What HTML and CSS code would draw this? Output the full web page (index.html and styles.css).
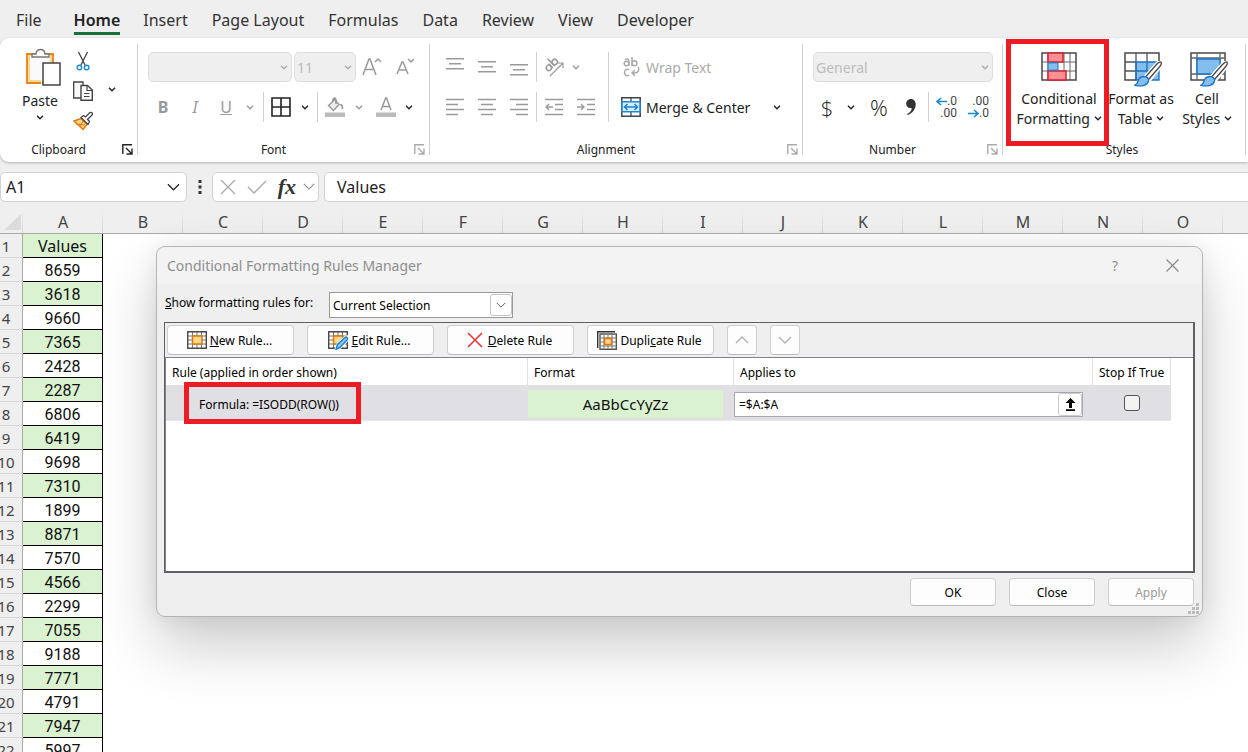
FILE: index.html
```html
<!DOCTYPE html>
<html lang="en">
<head>
<meta charset="utf-8">
<title>Conditional Formatting Rules Manager</title>
<link rel="stylesheet" href="styles.css">
</head>
<body>
<svg class="defs" aria-hidden="true">
  <symbol id="chev" viewBox="0 0 8 5"><path d="M1 .8 4 3.8 7 .8" fill="none" stroke="currentColor" stroke-width="1.4"/></symbol>
  <symbol id="chev-lg" viewBox="0 0 14 8"><path d="M1 1l6 6 6-6" fill="none" stroke="currentColor" stroke-width="1.3"/></symbol>
  <symbol id="launch" viewBox="0 0 11 11"><path d="M.8 10V.8H10M4 4l5.5 5.5M10 4.5V10H4.500" fill="none" stroke="currentColor" stroke-width="1.4"/></symbol>
  <symbol id="grid" viewBox="0 0 20 18"><path d="M.7.7h18.600v16.600H.7z" fill="#fff"/><path d="M5.500 1v16M10 1v16M14.500 1v16M1 5h18M1 9h18M1 13h18" stroke="#777" fill="none"/><path d="M.7.7h18.600v16.600H.7z" fill="none" stroke="#484848" stroke-width="1.400"/></symbol>
  <symbol id="brush" viewBox="0 0 28 26"><path d="M27 1c1 1 0 3-1 4.500L14.500 20l-4-3L22 4c2-2 4-3.600 5-3z" fill="#fff" stroke="#fff" stroke-width="4"/><path d="M26.800 1c1 1 .2 3-1 4.500L14.500 18.500l-3-2.500L22 4c2-2 4-3.600 4.800-3z" fill="#fff" stroke="#484848" stroke-width="1.300"/><path d="M10 15.500c3 0 5 2 4.500 4.500C13.500 24 8 26 .8 24.300c3-1.300 2.700-3 3.700-5.500 1-2.300 3-3.300 5.500-3.300z" fill="#83beec" stroke="#1a73c4" stroke-width="1.300"/></symbol>
</svg>

<header class="top">
  <nav class="tabs">
    <button class="tab tab-file">File</button>
    <button class="tab tab-on">Home</button>
    <button class="tab">Insert</button>
    <button class="tab">Page Layout</button>
    <button class="tab">Formulas</button>
    <button class="tab">Data</button>
    <button class="tab">Review</button>
    <button class="tab">View</button>
    <button class="tab">Developer</button>
  </nav>

  <div class="ribbon">
    <section class="group">
      <div class="clip">
        <button class="paste">
          <svg width="36" height="38" viewBox="0 0 36 38"><path d="M2 6h26v29H2z" fill="#fbd98b" stroke="#e8821e" stroke-width="1.800"/><path d="M5 8h20v24H5z" fill="#fafafa"/><path d="M7 9V6h4c.5-6 8.500-6 9 0h4v3z" fill="#fff" stroke="#777" stroke-width="1.400"/><path d="M18 15h17v22H18z" fill="#fff" stroke="#444" stroke-width="1.500"/><path d="M16.500 37V14" stroke="#fff"/></svg>
          <span>Paste</span>
          <svg class="chev"><use href="#chev"/></svg>
        </button>
        <div class="clip-tools">
          <button class="ib" aria-label="Cut"><svg width="14" height="20" viewBox="0 0 14 20"><path d="M2.500 1l6.500 13M11.500 1L5 14" stroke="#444" stroke-width="1.300" fill="none"/><circle cx="3.400" cy="16.500" r="2.300" fill="#fff" stroke="#2088d8" stroke-width="1.400"/><circle cx="10.600" cy="16.500" r="2.300" fill="#fff" stroke="#2088d8" stroke-width="1.400"/></svg></button>
          <button class="ib" aria-label="Copy"><svg width="20" height="20" viewBox="0 0 20 20"><path d="M8 17H.7V1H10v3" fill="#fafafa" stroke="#444" stroke-width="1.300"/><path d="M8 4.500h6.500L19.300 9v10.300H8z" fill="#fff" stroke="#444" stroke-width="1.400"/><path d="M14 5v4.500h5M11 12.500h5.500M11 15.500h5.500" fill="none" stroke="#444" stroke-width="1.200"/></svg></button>
          <button class="ib" aria-label="Format Painter"><svg width="20" height="20" viewBox="0 0 20 20"><path d="M1 10l7-2.500 6 6L10 18.500z" fill="#fbd98b" stroke="#e8750a" stroke-width="1.500"/><path d="M3 13l9 1M7 16l3-6" stroke="#e8750a"/><path d="M8 6.500l7 7 1.500-3-2-2 4.500-4.500c1.500-1.500-1-3.500-2.300-2.200L12.500 6l-2-1.500z" fill="#fff" stroke="#444" stroke-width="1.300"/></svg></button>
        </div>
        <button class="ib copy-more" aria-label="Copy options"><svg class="chev"><use href="#chev"/></svg></button>
      </div>
      <div class="glabel"><span>Clipboard</span><button class="launch" aria-label="Clipboard settings"><svg width="11" height="11"><use href="#launch"/></svg></button></div>
    </section>

    <section class="group off">
      <div class="rows">
        <div class="row font-row">
          <div class="combo combo-font"><select aria-label="Font" disabled><option></option></select><svg class="chev"><use href="#chev"/></svg></div>
          <div class="combo combo-size"><select aria-label="Font size" disabled><option>11</option></select><svg class="chev"><use href="#chev"/></svg></div>
          <button class="ib w32" aria-label="Increase font size"><svg width="20" height="22" viewBox="0 0 20 22"><path d="M1 19L7 3h1l6 16M3.300 13.500h8.400M13 6l3-3 3 3" fill="none" stroke="currentColor" stroke-width="1.500"/></svg></button>
          <button class="ib w32" aria-label="Decrease font size"><svg width="20" height="22" viewBox="0 0 20 22"><path d="M3 18L8 6h1l5 12M5 14h7M14 3l3 3 3-3" fill="none" stroke="currentColor" stroke-width="1.500"/></svg></button>
        </div>
        <div class="row">
          <button class="ib w32"><b>B</b></button>
          <button class="ib w32"><i>I</i></button>
          <button class="ib w30"><u>U</u></button>
          <button class="ib w18" aria-label="Underline options"><svg class="chev"><use href="#chev"/></svg></button>
          <span class="sep"></span>
          <button class="ib w32 dark" aria-label="Borders"><svg width="20" height="20" viewBox="0 0 20 20"><path d="M1 1h18v18H1zM10 1v18M1 10h18" fill="none" stroke="#222" stroke-width="1.600"/></svg></button>
          <button class="ib w16 dark" aria-label="Border options"><svg class="chev"><use href="#chev"/></svg></button>
          <span class="sep"></span>
          <button class="ib w32" aria-label="Fill color"><svg width="20" height="20" viewBox="0 0 20 20"><path d="M3.500 8.500L10 2.500l4 5-5.500 6z" fill="#eee" stroke="#999" stroke-width="1.400"/><path d="M8 4c0-4 3-4 3 0v3M15 8c1.500-1 2.500 1 2.500 4" fill="none" stroke="#999" stroke-width="1.700"/><path d="M0 15.500h20v4.500H0z" fill="#bbb"/></svg></button>
          <button class="ib w16" aria-label="Fill options"><svg class="chev"><use href="#chev"/></svg></button>
          <button class="ib w38" aria-label="Font color"><svg width="20" height="20" viewBox="0 0 20 20"><path d="M5 13L9.700 1h.8L15 13M6.500 9.500h7" fill="none" stroke="#999" stroke-width="1.500"/><path d="M0 15.500h20v4.500H0z" fill="#bbb"/></svg></button>
          <button class="ib dark" aria-label="Font color options"><svg class="chev"><use href="#chev"/></svg></button>
        </div>
      </div>
      <div class="glabel"><span>Font</span><button class="launch" aria-label="Font settings"><svg width="11" height="11"><use href="#launch"/></svg></button></div>
    </section>

    <section class="group off">
      <div class="align">
        <div class="rows">
          <div class="row">
            <button class="ib w32 up" aria-label="Top align"><svg width="18" height="12" viewBox="0 0 18 12"><path d="M0 .7h18M3 5.700h12M0 10.700h18" stroke="currentColor" stroke-width="1.400"/></svg></button>
            <button class="ib w32" aria-label="Middle align"><svg width="18" height="12" viewBox="0 0 18 12"><path d="M0 .7h18M3 5.700h12M0 10.700h18" stroke="currentColor" stroke-width="1.400"/></svg></button>
            <button class="ib w32 down" aria-label="Bottom align"><svg width="18" height="12" viewBox="0 0 18 12"><path d="M0 .7h18M3 5.700h12M0 10.700h18" stroke="currentColor" stroke-width="1.400"/></svg></button>
            <span class="sep sep-tight"></span>
            <button class="ib w32" aria-label="Orientation"><svg width="22" height="22" viewBox="0 0 22 22"><g fill="none" stroke="currentColor" stroke-width="1.500"><g transform="rotate(-45 8 9)"><circle cx="4.500" cy="9.500" r="2.600"/><path d="M7.200 6.500v5.800M10 2v10.300"/><circle cx="12.800" cy="9.500" r="2.700"/></g><path d="M7 20L20 7M15 7h5v5" stroke-width="1.200"/></g></svg></button>
            <button class="ib w12" aria-label="Orientation options"><svg class="chev"><use href="#chev"/></svg></button>
          </div>
          <div class="row">
            <button class="ib w32" aria-label="Align left"><svg width="18" height="18" viewBox="0 0 18 18"><path d="M0 1.500h18M0 6.500h12M0 11.500h18M0 16.500h12" stroke="currentColor" stroke-width="1.400"/></svg></button>
            <button class="ib w32" aria-label="Center"><svg width="18" height="18" viewBox="0 0 18 18"><path d="M0 1.500h18M3 6.500h12M0 11.500h18M3 16.500h12" stroke="currentColor" stroke-width="1.400"/></svg></button>
            <button class="ib w32" aria-label="Align right"><svg width="18" height="18" viewBox="0 0 18 18"><path d="M0 1.500h18M6 6.500h12M0 11.500h18M6 16.500h12" stroke="currentColor" stroke-width="1.400"/></svg></button>
            <span class="sep sep-tight"></span>
            <button class="ib w32" aria-label="Decrease indent"><svg width="18" height="18" viewBox="0 0 18 18"><path d="M0 1.500h18M10 6.500h8M10 11.500h8M0 16.500h18M8 9H1M4 6L1 9l3 3" fill="none" stroke="currentColor" stroke-width="1.400"/></svg></button>
            <button class="ib w32" aria-label="Increase indent"><svg width="18" height="18" viewBox="0 0 18 18"><path d="M0 1.500h18M10 6.500h8M10 11.500h8M0 16.500h18M0 9h7M4 6l3 3-3 3" fill="none" stroke="currentColor" stroke-width="1.400"/></svg></button>
          </div>
        </div>
        <div class="rows wrap-col">
          <div class="row"><button class="ib tb"><svg width="20" height="22" viewBox="0 0 20 22"><g fill="none" stroke="currentColor" stroke-width="1.500"><circle cx="5.500" cy="7.500" r="2.300"/><path d="M4 3.500c2-1 4-.5 4 1.500v5M11 1v9"/><circle cx="13.500" cy="7.200" r="2.500"/><path d="M8 14c-2-1.500-4.500-.5-4.500 2.500s2.500 4 4.500 2.500M17 11c2 3 0 6-3 6h-3M14 14l-3 3 3 3"/></g></svg><span>Wrap Text</span></button></div>
          <div class="row"><button class="ib tb dark"><svg width="20" height="20" viewBox="0 0 20 20"><path d="M.8.800h18.400v18.400H.8z" fill="#fff" stroke="#444" stroke-width="1.500"/><path d="M10 1v18" stroke="#444" stroke-width="1.300"/><path d="M1 4.800h18v10H1z" fill="#d5ecfb" stroke="#2088d8" stroke-width="1.500"/><path d="M3.500 10h13M6.500 7l-3 3 3 3M13.500 7l3 3-3 3" fill="none" stroke="#1a7fd0" stroke-width="1.500"/></svg><span>Merge &amp; Center</span></button><button class="ib dark merge-more" aria-label="Merge options"><svg class="chev"><use href="#chev"/></svg></button></div>
        </div>
      </div>
      <div class="glabel"><span>Alignment</span><button class="launch" aria-label="Alignment settings"><svg width="11" height="11"><use href="#launch"/></svg></button></div>
    </section>

    <section class="group off">
      <div class="rows">
        <div class="row"><div class="combo combo-num"><select aria-label="Number format" disabled><option>General</option></select><svg class="chev"><use href="#chev"/></svg></div></div>
        <div class="row dark">
          <button class="ib w30 sym">$</button>
          <button class="ib w18" aria-label="Currency options"><svg class="chev"><use href="#chev"/></svg></button>
          <button class="ib w38 sym">%</button>
          <button class="ib w26" aria-label="Comma style"><svg width="12" height="18" viewBox="0 0 12 18"><path d="M6 1c7 0 6.500 13-3.500 16l-.5-1c4-2 5-4.500 4.500-6C-.5 11-.5 1 6 1z" fill="#333"/></svg></button>
          <span class="sep"></span>
          <button class="dec" aria-label="Increase decimal"><span class="dec-row"><svg width="11" height="9" viewBox="0 0 11 9"><path d="M11 4.500H1M5 1L1 4.500 5 8" fill="none" stroke="#1a8ad8" stroke-width="1.600"/></svg>.0</span><span class="dec-row">.00</span></button>
          <button class="dec" aria-label="Decrease decimal"><span class="dec-row">.00</span><span class="dec-row"><svg width="11" height="9" viewBox="0 0 11 9"><path d="M0 4.500h10M6 1l4 3.500L6 8" fill="none" stroke="#1a8ad8" stroke-width="1.600"/></svg>.0</span></button>
        </div>
      </div>
      <div class="glabel"><span>Number</span><button class="launch" aria-label="Number settings"><svg width="11" height="11"><use href="#launch"/></svg></button></div>
    </section>

    <section class="group">
      <div class="styles">
        <button class="big marked">
          <svg width="36" height="36" viewBox="0 0 36 36"><path d="M1 1h34v27H1z" fill="#fff"/><path d="M7 1v27M13 1v27M23 1v27M29 1v27M1 10h34M1 19h34" stroke="#666" fill="none"/><path d="M1 1h34v27H1z" fill="none" stroke="#484848" stroke-width="1.500"/><path d="M7 1h15v9H7zM7 19h18v9H7z" fill="#ff8f94" stroke="#d8222a" stroke-width="1.500"/><path d="M7 10.800h10v7.400H7z" fill="#83beec" stroke="#1a73c4"/></svg>
          <span>Conditional</span><span>Formatting <svg class="chev"><use href="#chev"/></svg></span>
        </button>
        <button class="big">
          <svg width="38" height="36" viewBox="0 0 38 36"><path d="M1 1h34v27H1z" fill="#fff"/><path d="M12 10h23v18H12z" fill="#83beec"/><path d="M12 1v27M23 1v9M1 10h11M1 19h11" stroke="#555" stroke-width="1.300" fill="none"/><path d="M12 28V10h23v18zM23 10v18M12 19h23" fill="none" stroke="#1a73c4" stroke-width="1.300"/><path d="M12 28H1V1h34v9" fill="none" stroke="#484848" stroke-width="1.500"/><use href="#brush" x="10" y="9" width="28" height="26"/></svg>
          <span>Format as</span><span>Table <svg class="chev"><use href="#chev"/></svg></span>
        </button>
        <button class="big">
          <svg width="38" height="36" viewBox="0 0 38 36"><path d="M1 1h34v27H1z" fill="#fff" stroke="#484848" stroke-width="1.500"/><path d="M7 1v27M30 1v27M1 6h34M1 22h34" stroke="#666" fill="none" stroke-width="1.300"/><path d="M7 7h23v15H7z" fill="#83beec" stroke="#1a73c4" stroke-width="1.400"/><use href="#brush" x="10" y="9" width="28" height="26"/></svg>
          <span>Cell</span><span>Styles <svg class="chev"><use href="#chev"/></svg></span>
        </button>
      </div>
      <div class="glabel"><span>Styles</span></div>
    </section>
  </div>

  <div class="fbar">
    <div class="namebox"><input aria-label="Name box" value="A1"><svg width="13" height="8"><use href="#chev-lg"/></svg></div>
    <svg class="dots" width="4" height="14" viewBox="0 0 4 14"><path d="M.5 0h3v3h-3zM.5 5.500h3v3h-3zM.5 11h3v3h-3z" fill="#333"/></svg>
    <div class="fx">
      <button class="ib" aria-label="Cancel"><svg width="16" height="16" viewBox="0 0 16 16"><path d="M1 1l14 14M15 1L1 15" stroke="#aaa" stroke-width="1.300"/></svg></button>
      <button class="ib" aria-label="Enter"><svg width="20" height="14" viewBox="0 0 20 14"><path d="M1 7l6 6L19 1" fill="none" stroke="#aaa" stroke-width="1.300"/></svg></button>
      <button class="ib fxname"><i>fx</i></button>
      <button class="ib" aria-label="Function options"><svg width="12" height="7"><use href="#chev-lg"/></svg></button>
    </div>
    <input class="formula" aria-label="Formula" value="Values">
  </div>
</header>

<main class="sheet">
  <table class="cells">
    <colgroup><col class="c-num"><col span="16" class="c-val"></colgroup>
    <thead><tr><th class="corner"><svg width="17" height="16" viewBox="0 0 17 16"><path d="M17 0v16H0z" fill="#dcdcdc"/></svg></th><th>A</th><th>B</th><th>C</th><th>D</th><th>E</th><th>F</th><th>G</th><th>H</th><th>I</th><th>J</th><th>K</th><th>L</th><th>M</th><th>N</th><th>O</th><th></th></tr></thead>
    <tbody>
      <tr><th>1</th><td class="head">Values</td></tr>
      <tr><th>2</th><td>8659</td></tr>
      <tr><th>3</th><td>3618</td></tr>
      <tr><th>4</th><td>9660</td></tr>
      <tr><th>5</th><td>7365</td></tr>
      <tr><th>6</th><td>2428</td></tr>
      <tr><th>7</th><td>2287</td></tr>
      <tr><th>8</th><td>6806</td></tr>
      <tr><th>9</th><td>6419</td></tr>
      <tr><th>10</th><td>9698</td></tr>
      <tr><th>11</th><td>7310</td></tr>
      <tr><th>12</th><td>1899</td></tr>
      <tr><th>13</th><td>8871</td></tr>
      <tr><th>14</th><td>7570</td></tr>
      <tr><th>15</th><td>4566</td></tr>
      <tr><th>16</th><td>2299</td></tr>
      <tr><th>17</th><td>7055</td></tr>
      <tr><th>18</th><td>9188</td></tr>
      <tr><th>19</th><td>7771</td></tr>
      <tr><th>20</th><td>4791</td></tr>
      <tr><th>21</th><td>7947</td></tr>
      <tr><th>22</th><td>5997</td></tr>
    </tbody>
  </table>
</main>

<section class="dialog" role="dialog" aria-labelledby="dlg-title">
  <header class="dlg-bar">
    <h1 id="dlg-title">Conditional Formatting Rules Manager</h1>
    <button class="ib help">?</button>
    <button class="ib close" aria-label="Close dialog"><svg width="13" height="13" viewBox="0 0 13 13"><path d="M.5.5l12 12M12.500.5l-12 12" stroke="#888" stroke-width="1.200"/></svg></button>
  </header>
  <div class="dlg-body">
    <div class="scope">
      <label for="scope"><u>S</u>how formatting rules for:</label>
      <div class="scope-box"><select id="scope"><option>Current Selection</option></select><span class="scope-arrow"><svg width="10" height="6"><use href="#chev-lg"/></svg></span></div>
    </div>
    <div class="frame">
      <div class="tools">
        <button class="btn tool"><svg width="20" height="18" viewBox="0 0 20 18"><use href="#grid"/><path d="M5.500 5h9.500v8H5.500z" fill="#fbd98b" stroke="#e0760f" stroke-width="1.500"/></svg><span><u>N</u>ew Rule...</span></button>
        <button class="btn tool"><svg width="20" height="19" viewBox="0 0 20 19"><use href="#grid" width="20" height="18"/><path d="M5.500 5h9.500v8H5.500z" fill="#fbd98b" stroke="#e0760f" stroke-width="1.500"/><path d="M8 18.500l2-5.500 8-7c2-1 3 1 1.500 2.500l-7 7.500z" fill="#fff" stroke="#fff" stroke-width="3"/><path d="M8 18.300l1.500-4.800 7.500-7c1.500-1.300 3.500.7 2.200 2.200L12 16.500z" fill="#8cc8f2" stroke="#1a7fd0" stroke-width="1.400"/></svg><span><u>E</u>dit Rule...</span></button>
        <button class="btn tool"><svg class="x" width="16" height="16" viewBox="0 0 16 16"><path d="M1 1l14 14M15 1L1 15" stroke="#e8373d" stroke-width="1.600"/></svg><span><u>D</u>elete Rule</span></button>
        <button class="btn tool"><svg width="20" height="19" viewBox="0 0 20 19"><path d="M.7 17V.7H18" fill="none" stroke="#333" stroke-width="1.400"/><path d="M3 3h16.300v15.300H3z" fill="#fff" stroke="#555" stroke-width="1.400"/><path d="M7 3v15M11 3v15M15 3v15M3 7h16M3 11h16M3 15h16" stroke="#777"/><path d="M7.500 7.500h7v6h-7z" fill="#fbd98b" stroke="#e0760f" stroke-width="1.500"/></svg><span>Dupli<u>c</u>ate Rule</span></button>
        <button class="btn move" aria-label="Move up"><svg width="14" height="8" viewBox="0 0 14 8"><path d="M1 7l6-6 6 6" fill="none" stroke="currentColor" stroke-width="1.300"/></svg></button>
        <button class="btn move" aria-label="Move down"><svg width="14" height="8"><use href="#chev-lg"/></svg></button>
      </div>
      <div class="list">
        <table class="rules">
          <colgroup><col class="r-rule"><col class="r-format"><col class="r-applies"><col class="r-stop"></colgroup>
          <thead><tr><th>Rule (applied in order shown)</th><th>Format</th><th>Applies to</th><th>Stop If True</th></tr></thead>
          <tbody><tr>
            <td class="t-rule"><span class="formula-text">Formula: =ISODD(ROW())</span></td>
            <td><div class="preview">AaBbCcYyZz</div></td>
            <td><div class="range"><input aria-label="Applies to" value="=$A:$A"><button class="pick" aria-label="Collapse dialog"><svg width="11" height="13" viewBox="0 0 11 13"><path d="M5.500 0L10.500 5H7v5H4V5H.5zM1 11.300h9V13H1z" fill="#000"/></svg></button></div></td>
            <td class="t-stop"><input type="checkbox" class="stop" aria-label="Stop If True"></td>
          </tr></tbody>
        </table>
      </div>
    </div>
    <footer class="actions">
      <button class="btn act">OK</button>
      <button class="btn act">Close</button>
      <button class="btn act" disabled>Apply</button>
    </footer>
  </div>
  <svg class="grip" width="12" height="12" viewBox="0 0 12 12"><path d="M8 0h3v3H8zM4 4h3v3H4zM8 4h3v3H8zM0 8h3v3H0zM4 8h3v3H4zM8 8h3v3H8z" fill="#bbb"/></svg>
</section>
</body>
</html>
```

FILE: styles.css
```css
* { box-sizing: border-box; }
body {
  margin: 0;
  height: 100vh;
  display: flex;
  flex-direction: column;
  overflow: hidden;
  position: relative;
  background: #fff;
  color: #222;
  font: 14px "Noto Sans", "Open Sans", sans-serif;
}
button, input, select { font: inherit; color: inherit; margin: 0; }
button { padding: 0; border: 0; background: none; }
svg { display: block; flex: none; }
.defs { position: absolute; width: 0; height: 0; }
.chev { width: 8px; height: 5px; }

.top { background: #efefef; flex: none; }

/* Tabs */
.tabs { display: flex; gap: 24px; height: 38px; padding: 4px 16px 0; }
.tab { font-size: 16px; line-height: 28px; height: 31px; padding: 2px 0 1px; white-space: nowrap; color: #333; }
.tab-file { margin-right: 8px; }
.tab-on { margin-right: -1px; font-weight: 600; color: #222; border-bottom: 3px solid #18703a; padding: 2px 0 0; }

/* Ribbon */
.ribbon {
  display: grid;
  grid-template-columns: 138fr 292fr 373fr 200fr 245fr;
  height: 124px;
  background: #fff;
  border-radius: 9px 0 0 9px;
  box-shadow: 0 1px 3px rgba(0, 0, 0, .25);
}
.group { position: relative; display: flex; flex-direction: column; justify-content: space-between; padding: 14px 2px 3px 9px; min-width: 0; }
.group::after { content: ""; position: absolute; right: 0; top: 6px; bottom: 7px; width: 1px; background: #cfcfcf; }
.group:last-child::after { right: 2px; }
.off { color: #9a9a9a; }
.dark { color: #222; }
.glabel { display: flex; align-items: center; height: 20px; color: #222; font-size: 12px; }
.glabel span { flex: 1; padding-right: 14px; text-align: center; }
.launch { width: 14px; color: #222; }
.off .launch { color: #aaa; }
.rows { display: flex; flex-direction: column; gap: 10px; }
.row { display: flex; align-items: center; height: 30px; }
.ib { display: flex; align-items: center; justify-content: center; height: 30px; font-size: 16px; white-space: nowrap; }
.w12 { width: 12px; } .w16 { width: 16px; } .w18 { width: 18px; }
.w26 { width: 26px; } .w30 { width: 30px; } .w32 { width: 32px; } .w38 { width: 38px; }
.sep { width: 1px; height: 30px; margin: 0 1px 0 4px; background: #cfcfcf; }
.sep-tight { margin: 0 1px; }
.up { padding-bottom: 6px; }
.down { padding-top: 6px; }
.sym { font: 300 22px "Open Sans", sans-serif; }

.clip { display: flex; margin-top: -6px; }
.paste { display: flex; flex-direction: column; align-items: center; width: 62px; padding-top: 2px; gap: 5px; }
.paste svg:first-child { margin-left: 6px; }
.clip-tools { display: flex; flex-direction: column; width: 24px; }
.copy-more { width: 34px; margin-top: 28px; }

.combo { position: relative; display: flex; align-items: center; }
.combo select {
  appearance: none;
  width: 100%;
  height: 30px;
  padding: 0 2px;
  border: 1px solid #dedede;
  border-radius: 5px;
  background: #efefef;
  color: #bcbcbc;
  opacity: 1;
}
.combo .chev { position: absolute; right: 4px; color: #aaa; }
.font-row { padding-left: 1px; }
.combo-font { width: 144px; margin-right: 2px; }
.combo-size { width: 62px; }
.combo-num { width: 180px; margin-left: 1px; }

.align { display: flex; }
.wrap-col { margin-left: 6px; padding-left: 12px; border-left: 1px solid #cfcfcf; }
.tb { gap: 5px; font-size: 14px; color: #ababab; }
.tb.dark { color: #222; }
.merge-more { width: 54px; }
.dec { display: flex; flex-direction: column; justify-content: center; width: 32px; height: 30px; font: 12px/12px Roboto, sans-serif; color: #444; }
.dec-row { display: flex; align-items: center; justify-content: flex-end; width: 27px; height: 12px; }

.styles { display: flex; margin-left: -2px; }
.big { position: relative; display: flex; flex-direction: column; align-items: center; width: 66px; line-height: 20px; white-space: nowrap; }
.big > svg { margin: 0 -3px 1px 0; }
.big .chev { display: inline-block; vertical-align: 3px; }
.marked { width: 98px; }
.marked > svg { margin-right: 0; }
.marked::after { content: ""; position: absolute; inset: -13px -1px -17px -4px; border: 5px solid #ed1c24; }

/* Formula bar */
.fbar { display: flex; align-items: center; height: 48px; padding-top: 1px; }
.namebox, .fx, .formula { height: 30px; background: #fff; border: 1px solid #d2d2d2; border-radius: 5px; }
.namebox { display: flex; align-items: center; width: 187px; padding: 0 6px 0 5px; }
.namebox input { flex: 1; min-width: 0; border: 0; padding: 0; background: none; font-size: 16px; }
.dots { margin: 0 10px 0 11px; }
.fx { display: flex; align-items: center; justify-content: space-between; width: 107px; padding: 0 3px 0 7px; color: #888; }
.fxname { font: bold 22px "Liberation Serif", serif; color: #333; margin-right: -4px; }
.formula { flex: 1; min-width: 0; margin-left: 5px; padding: 0 12px; border-right: 0; border-radius: 5px 0 0 5px; font-size: 16px; }

/* Sheet */
.sheet { flex: 1; overflow: hidden; min-height: 0; }
.cells { margin-left: -10px; width: 1313px; table-layout: fixed; border-collapse: separate; border-spacing: 0; }
.c-num { width: 33px; }
.c-val { width: 80px; }
.cells th, .cells td { height: 24px; padding: 0; text-align: center; font-weight: 400; line-height: 20px; }
.cells thead th { background: linear-gradient(#efefef, #d4d4d4) right / 1px 100% no-repeat #efefef; border-bottom: 1px solid #aaa; color: #444; font-size: 16px; }
.corner svg { margin: 0 2px 0 auto; }
.cells tbody th { background: #efefef; border-right: 1px solid #aaa; border-bottom: 1px solid #d4d4d4; color: #444; font-size: 15px; }
.cells td { padding-top: 2px; border-right: 1px solid #000; border-bottom: 1px solid #000; color: #111; font: 16px/20px Roboto, sans-serif; }
.cells tbody tr:nth-child(odd) td { background: #daf2d0; }
.cells td.head { padding-top: 0; font: 16px/20px "Noto Sans", sans-serif; }

/* Dialog */
.dialog {
  position: absolute;
  left: 156px;
  right: 45px;
  top: 246px;
  background: #efefef;
  border: 1px solid #b4b4b4;
  border-radius: 9px;
  box-shadow: 0 30px 60px rgba(0, 0, 0, .2), 0 0 24px rgba(0, 0, 0, .08);
  color: #000;
  font-size: 12px;
}
.dlg-bar { display: flex; align-items: center; height: 37px; padding: 0 23px 1px 10px; background: #f3f3f3; border-radius: 9px 9px 0 0; color: #8e8e8e; }
.dlg-bar h1 { flex: 1; margin: 0; font-size: 14px; font-weight: 400; }
.help { width: 20px; margin-right: 41px; font-size: 14px; }
.dlg-body { padding: 0 7px 10px; }
.scope { display: flex; align-items: center; padding: 8px 1px 4px; gap: 11px; }
.scope label { width: 153px; padding-bottom: 5px; }
.scope-box { position: relative; width: 184px; }
.scope-box select { appearance: none; display: block; width: 100%; height: 26px; padding: 0 3px; border: 1px solid #999; border-radius: 0; background: #fff; }
.scope-arrow { position: absolute; right: 1px; top: 2px; width: 22px; height: 22px; display: grid; place-items: center; border: 1px solid #c4c4c4; border-radius: 3px; background: #fff; color: #555; }
.frame { border: solid #606064; border-width: 1px 2px 2px 1px; }
.btn { display: flex; align-items: center; justify-content: center; background: #fdfdfd; border: 1px solid #d0d0d0; border-bottom-color: #bcbcbc; border-radius: 4px; }
.tools { display: flex; gap: 13px; padding: 2px; }
.tool { width: 127px; height: 30px; gap: 3px; padding-right: 2px; white-space: nowrap; }
.x { margin-right: 2px; }
.move { width: 30px; height: 30px; color: #b0b0b0; }
.list { min-height: 214px; background: #fff; border-top: 1px solid #82828c; border-left: 1px solid #82828c; padding-right: 22px; }
.rules { width: 100%; table-layout: fixed; border-collapse: separate; border-spacing: 0; }
.r-rule { width: 362px; }
.r-format { width: 206px; }
.r-stop { width: 78px; }
.rules th { height: 27px; padding: 2px 5px 0 6px; border-right: 1px solid #e2e2e2; text-align: left; font-weight: 400; white-space: nowrap; }
.rules td { height: 36px; padding: 0; background: #e0dfe4; border-bottom: 1px solid #e9e9ec; }
.rules .t-rule { padding: 4px 0 0 33px; }
.formula-text { position: relative; display: inline-block; width: 148px; line-height: 16px; }
.formula-text::after { content: ""; position: absolute; inset: -15px -14px -11px -15px; border: 5px solid #ed1c24; }
.preview { width: 195px; height: 28px; line-height: 28px; margin-top: 2px; background: #daf2d0; text-align: center; font-size: 15px; color: #111; }
.range { display: flex; height: 25px; margin: 3px 10px 0 0; border: 1px solid #a8a8ae; background: #fff; }
.range input { flex: 1; min-width: 0; border: 0; padding: 0 4px; background: none; }
.pick { display: grid; place-items: center; width: 24px; border: 1px solid #ccc; border-radius: 3px; background: #fff; }
.t-stop { text-align: center; }
.stop { appearance: none; display: inline-block; width: 16px; height: 16px; border: 1px solid #555; border-radius: 3px; background: #f3f3f3; vertical-align: middle; }
.actions { display: flex; justify-content: flex-end; gap: 13px; padding: 5px 1px 0; }
.act { width: 86px; height: 28px; }
.act:disabled { color: #999; }
.grip { position: absolute; right: 2px; bottom: 1px; }
```
